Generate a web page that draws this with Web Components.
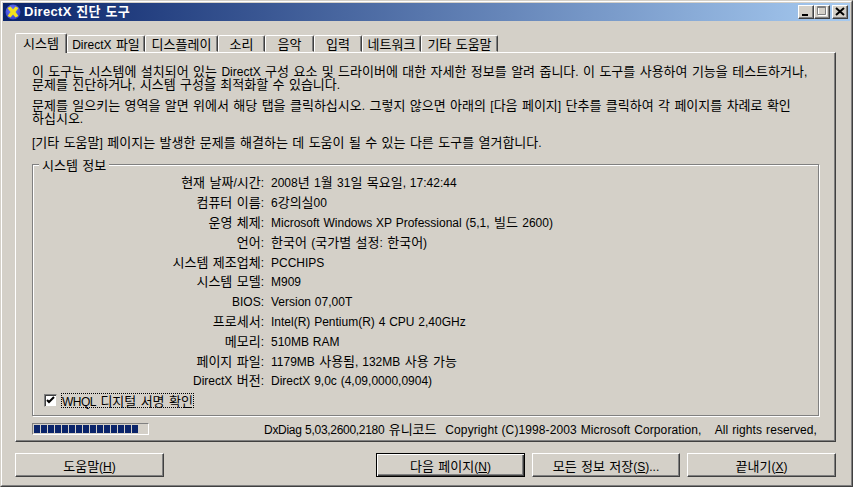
<!DOCTYPE html>
<html lang="ko">
<head>
<meta charset="utf-8">
<title>DirectX 진단 도구</title>
<style>
  html, body { margin: 0; padding: 0; background: #d4d0c8; }
  body { font: 13px/13px "Noto Sans CJK KR", "Liberation Sans", sans-serif; word-spacing: 0.75px; color: #000; }
  /* the latin runs are set smaller than the hangul around them */
  .l { font: 12px/0 "Liberation Sans", sans-serif; letter-spacing: var(--latin-spacing, 0); word-spacing: 0.5px; }
</style>
</head>
<body>

<dx-window>
  <dx-titlebar slot="title" text="DirectX 진단 도구"></dx-titlebar>

  <dx-tabs slot="tabs">
    <dx-tab width="52" selected>시스템</dx-tab>
    <dx-tab width="78">DirectX 파일</dx-tab>
    <dx-tab width="73">디스플레이</dx-tab>
    <dx-tab width="47">소리</dx-tab>
    <dx-tab width="49">음악</dx-tab>
    <dx-tab width="48">입력</dx-tab>
    <dx-tab width="59">네트워크</dx-tab>
    <dx-tab width="77">기타 도움말</dx-tab>
  </dx-tabs>

  <dx-panel slot="panel">
    <dx-intro>
      <p>이 도구는 시스템에 설치되어 있는 DirectX 구성 요소 및 드라이버에 대한 자세한 정보를 알려 줍니다. 이 도구를 사용하여 기능을 테스트하거나,<br>문제를 진단하거나, 시스템 구성을 최적화할 수 있습니다.</p>
      <p>문제를 일으키는 영역을 알면 위에서 해당 탭을 클릭하십시오. 그렇지 않으면 아래의 [다음 페이지] 단추를 클릭하여 각 페이지를 차례로 확인<br>하십시오.</p>
      <p>[기타 도움말] 페이지는 발생한 문제를 해결하는 데 도움이 될 수 있는 다른 도구를 열거합니다.</p>
    </dx-intro>

    <dx-group text="시스템 정보">
      <dx-info-row label="현재 날짜/시간:">2008년 1월 31일 목요일, 17:42:44</dx-info-row>
      <dx-info-row label="컴퓨터 이름:">6강의실00</dx-info-row>
      <dx-info-row label="운영 체제:">Microsoft Windows XP Professional (5,1, 빌드 2600)</dx-info-row>
      <dx-info-row label="언어:">한국어 (국가별 설정: 한국어)</dx-info-row>
      <dx-info-row label="시스템 제조업체:">PCCHIPS</dx-info-row>
      <dx-info-row label="시스템 모델:">M909</dx-info-row>
      <dx-info-row label="BIOS:">Version 07,00T</dx-info-row>
      <dx-info-row label="프로세서:">Intel(R) Pentium(R) 4 CPU 2,40GHz</dx-info-row>
      <dx-info-row label="메모리:">510MB RAM</dx-info-row>
      <dx-info-row label="페이지 파일:">1179MB 사용됨, 132MB 사용 가능</dx-info-row>
      <dx-info-row label="DirectX 버전:">DirectX 9,0c (4,09,0000,0904)</dx-info-row>
      <dx-check slot="footer">WHQL 디지털 서명 확인</dx-check>
    </dx-group>

    <dx-status>
      <dx-progress slot="progress" blocks="15"></dx-progress>
      <span><span style="--latin-spacing: -0.3px">DxDiag 5,03,2600,2180</span> 유니코드 &nbsp;Copyright (C)1998-2003 Microsoft Corporation, &nbsp;&nbsp;All rights reserved,</span>
    </dx-status>
  </dx-panel>

  <dx-button slot="actions"><span>도움말(<u>H</u>)</span></dx-button>
  <dx-spacer slot="actions"></dx-spacer>
  <dx-button slot="actions" default><span>다음 페이지(<u>N</u>)</span></dx-button>
  <dx-button slot="actions" width="148"><span>모든 정보 저장(<u>S</u>)...</span></dx-button>
  <dx-button slot="actions"><span>끝내기(<u>X</u>)</span></dx-button>
</dx-window>

<script>
  const LATIN_RUN = /[\x21-\x7e](?:[\x20-\x7e]*[\x21-\x7e])?/g;
  const LATIN_CSS = `.l { font: 12px/0 "Liberation Sans", sans-serif; word-spacing: 0.5px; }`;

  const latin = (text) => text.replace(LATIN_RUN, (run) => `<span class="l">${run}</span>`);

  // wrap the latin runs of everything that is passed in through the light dom
  function wrapLatin(root) {
    const walker = document.createTreeWalker(root, NodeFilter.SHOW_TEXT);
    const nodes = [];
    while (walker.nextNode()) nodes.push(walker.currentNode);
    for (const node of nodes) {
      if (!/[\x21-\x7e]/.test(node.data)) continue;
      const holder = document.createElement("template");
      holder.innerHTML = latin(node.data.replace(/&/g, "&amp;").replace(/</g, "&lt;"));
      node.replaceWith(holder.content);
    }
  }

  // small helper so each class only has to hand over its css and html
  class DxElement extends HTMLElement {
    connectedCallback() {
      if (!this.shadowRoot) this.attachShadow({ mode: "open" });
      this.shadowRoot.innerHTML = `<style>${LATIN_CSS}${this.constructor.styles}</style>${this.render()}`;
      if (this.hasAttribute("width")) this.style.width = `${this.getAttribute("width")}px`;
    }
    render() {
      return "<slot></slot>";
    }
  }

  class DxWindow extends DxElement {
    static get styles() {
      return /* css */`
        :host {
          display: block;
          box-sizing: border-box;
          width: 853px;
          height: 487px;
          background: #d4d0c8;
          border: 1px solid;
          border-color: #d4d0c8 #404040 #404040 #d4d0c8;
        }
        .frame {
          box-sizing: border-box;
          height: 100%;
          border: 1px solid;
          border-color: #fff #808080 #808080 #fff;
          padding: 1px;
        }
        .body { padding: 12px 14px 0 12px; }
        .actions {
          display: flex;
          gap: 7px;
          margin-top: 11px;
        }
      `;
    }
    render() {
      return /* html */`
        <div class="frame">
          <slot name="title"></slot>
          <div class="body">
            <slot name="tabs"></slot>
            <slot name="panel"></slot>
            <div class="actions"><slot name="actions"></slot></div>
          </div>
        </div>
      `;
    }
  }

  class DxTitlebar extends DxElement {
    static get styles() {
      return /* css */`
        :host {
          display: flex;
          align-items: center;
          height: 18px;
          padding: 0 2px;
          background: linear-gradient(90deg, #0a246a, #a6caf0);
          color: #fff;
          font: bold 13px/18px "Liberation Sans", "Noto Sans CJK KR", sans-serif;
        }
        svg { display: block; flex: none; }
        .text { margin-left: 3px; flex: 1; white-space: nowrap; letter-spacing: 0.3px; }
        .ctl {
          box-sizing: border-box;
          width: 16px;
          height: 14px;
          background: #d4d0c8;
          border: 1px solid;
          border-color: #fff #404040 #404040 #fff;
          box-shadow: inset -1px -1px 0 #808080;
        }
        .close { margin-left: 2px; }
      `;
    }
    render() {
      return /* html */`
        <svg width="16" height="16" viewBox="0 0 16 16">
          <defs>
            <radialGradient id="orb" cx="45%" cy="40%" r="65%">
              <stop offset="0" stop-color="#7a88ff"/>
              <stop offset="1" stop-color="#2c34c8"/>
            </radialGradient>
          </defs>
          <circle cx="8" cy="8" r="7.5" fill="url(#orb)"/>
          <path d="M2.500 4L5.500 2.500 8 5.500l2.500-3L13.500 4 10.500 8l3 4-3 1.500L8 10.500l-2.500 3L2.500 12l3-4z" fill="#f4e21c"/>
        </svg>
        <span class="text">${this.getAttribute("text")}</span>
        <div class="ctl">
          <svg width="14" height="12" viewBox="0 0 14 12"><rect x="3" y="8" width="6" height="2" fill="#000"/></svg>
        </div>
        <div class="ctl">
          <svg width="14" height="12" viewBox="0 0 14 12">
            <path d="M3.500 1.500h8v8h-8z" fill="none" stroke="#fff"/>
            <path d="M2.500 .5h8v8h-8zM2.500 1.500h8" fill="none" stroke="#808080"/>
          </svg>
        </div>
        <div class="ctl close">
          <svg width="14" height="12" viewBox="0 0 14 12"><path d="M3 2l8 7M11 2l-8 7" stroke="#000" stroke-width="2" fill="none"/></svg>
        </div>
      `;
    }
  }

  class DxTabs extends DxElement {
    static get styles() {
      return /* css */`
        :host {
          display: flex;
          align-items: flex-end;
          height: 19px;
          position: relative;
          z-index: 1;
        }
      `;
    }
  }

  class DxTab extends DxElement {
    static get styles() {
      return /* css */`
        :host {
          display: block;
          box-sizing: border-box;
          height: 17px;
          line-height: 16px;
          text-align: center;
          white-space: nowrap;
          background: #d4d0c8;
          border: 1px solid;
          border-color: #fff #404040 transparent #fff;
          border-radius: 2px 2px 0 0;
          box-shadow: inset -1px 0 0 #808080;
        }
        :host([selected]) {
          height: 20px;
          line-height: 18px;
          margin-bottom: -1px;
          border-bottom: 0;
        }
      `;
    }
  }

  class DxPanel extends DxElement {
    static get styles() {
      return /* css */`
        :host {
          display: block;
          box-sizing: border-box;
          height: 390px;
          padding: 11px 16px 0 16px;
          border: 1px solid;
          border-color: #fff #404040 #404040 #fff;
          box-shadow: inset -1px -1px 0 #808080;
        }
      `;
    }
  }

  class DxIntro extends DxElement {
    static get styles() {
      return /* css */`
        :host {
          display: block;
          height: 89px;
          white-space: nowrap;
        }
        ::slotted(p) { margin: 0 0 8px; }
        ::slotted(p:last-child) { margin-top: 11px; }
      `;
    }
  }

  class DxGroup extends DxElement {
    static get styles() {
      return /* css */`
        :host {
          display: block;
          box-sizing: border-box;
          position: relative;
          width: 787px;
          height: 252px;
          margin-top: 11px;
          padding: 7px 0 0;
          border: 1px solid #808080;
          box-shadow: 1px 1px 0 #fff, inset 1px 1px 0 #fff;
        }
        .legend {
          position: absolute;
          top: -7px;
          left: 6px;
          padding: 0 3px;
          background: #d4d0c8;
          line-height: 13px;
        }
        .footer { margin-top: 3px; padding-left: 11px; }
      `;
    }
    render() {
      return /* html */`
        <div class="legend">${this.getAttribute("text")}</div>
        <slot></slot>
        <div class="footer"><slot name="footer"></slot></div>
      `;
    }
  }

  class DxInfoRow extends DxElement {
    static get styles() {
      return /* css */`
        :host {
          display: grid;
          grid-template-columns: 231px 1fr;
          column-gap: 7px;
          align-items: center;
          height: 19.8px;
          white-space: nowrap;
        }
        .label { text-align: right; }
      `;
    }
    render() {
      return /* html */`
        <div class="label">${latin(this.getAttribute("label"))}</div>
        <div><slot></slot></div>
      `;
    }
  }

  class DxCheck extends DxElement {
    static get styles() {
      return /* css */`
        :host {
          display: flex;
          align-items: center;
          gap: 4px;
          --latin-spacing: -0.5px;
        }
        .box {
          box-sizing: border-box;
          width: 13px;
          height: 13px;
          background: #fff;
          border: 1px solid;
          border-color: #808080 #d4d0c8 #d4d0c8 #808080;
          box-shadow: inset 1px 1px 0 #404040;
        }
        svg { display: block; }
        .label {
          line-height: 13px;
          border: 1px dotted #000;
          white-space: nowrap;
        }
      `;
    }
    render() {
      return /* html */`
        <div class="box">
          <svg width="11" height="11" viewBox="0 0 11 11"><path d="M2 5l2 2 5-5" fill="none" stroke="#000" stroke-width="2"/></svg>
        </div>
        <div class="label"><slot></slot></div>
      `;
    }
  }

  class DxStatus extends DxElement {
    static get styles() {
      return /* css */`
        :host {
          display: flex;
          justify-content: space-between;
          align-items: center;
          width: 785px;
          height: 13px;
          margin-top: 6px;
          white-space: nowrap;
          --latin-spacing: 0.1px;
        }
      `;
    }
    render() {
      return `<slot name="progress"></slot><div><slot></slot></div>`;
    }
  }

  class DxProgress extends DxElement {
    static get styles() {
      return /* css */`
        :host {
          display: flex;
          gap: 1px;
          box-sizing: border-box;
          width: 117px;
          height: 12px;
          padding: 1px;
          border: 1px solid;
          border-color: #808080 #fff #fff #808080;
        }
        i { display: block; width: 6px; background: #0a246a; }
      `;
    }
    render() {
      return "<i></i>".repeat(Number(this.getAttribute("blocks")));
    }
  }

  class DxButton extends DxElement {
    static get styles() {
      return /* css */`
        :host {
          display: flex;
          align-items: center;
          justify-content: center;
          box-sizing: border-box;
          width: 149px;
          height: 24px;
          white-space: nowrap;
          background: #d4d0c8;
          border: 1px solid;
          border-color: #fff #404040 #404040 #fff;
          box-shadow: inset -1px -1px 0 #808080;
        }
        :host([default]) {
          border-color: #000;
          box-shadow: inset 1px 1px 0 #fff, inset -1px -1px 0 #404040, inset -2px -2px 0 #808080;
        }
      `;
    }
  }

  class DxSpacer extends DxElement {
    static get styles() {
      return `:host { display: block; flex: 1; }`;
    }
  }

  wrapLatin(document.querySelector("dx-tabs"));
  wrapLatin(document.querySelector("dx-panel"));
  document.querySelectorAll("dx-button").forEach(wrapLatin);

  customElements.define("dx-window", DxWindow);
  customElements.define("dx-titlebar", DxTitlebar);
  customElements.define("dx-tabs", DxTabs);
  customElements.define("dx-tab", DxTab);
  customElements.define("dx-panel", DxPanel);
  customElements.define("dx-intro", DxIntro);
  customElements.define("dx-group", DxGroup);
  customElements.define("dx-info-row", DxInfoRow);
  customElements.define("dx-check", DxCheck);
  customElements.define("dx-status", DxStatus);
  customElements.define("dx-progress", DxProgress);
  customElements.define("dx-button", DxButton);
  customElements.define("dx-spacer", DxSpacer);
</script>
</body>
</html>
